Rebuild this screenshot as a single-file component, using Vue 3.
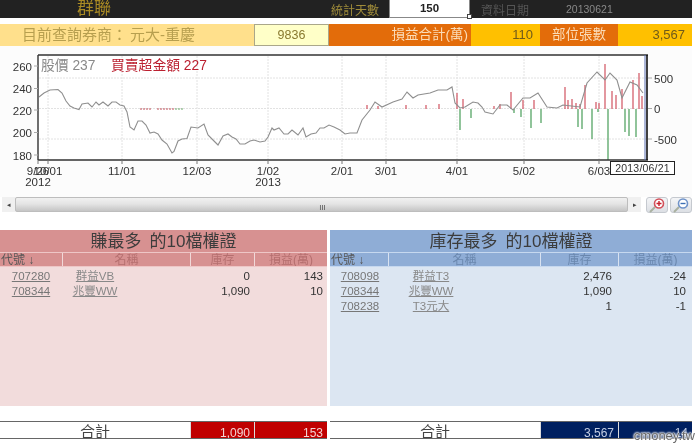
<script setup>
const pricePoints = '39,97 44,93 50,90 58,89.5 62,93 66,101 70,106 74,108 79,109.5 82,104 88,103 92,107 96,102 99,105 103,102 108,106 112,102 116,102 120,105 124,106 127,112 130,127 134,130 138,121 142,121 146,125 150,133 154,132 158,134 162,140 167,144 172,153 174,151.5 178,141 182,139 187,138.5 191,127 198,128 204,124 208,135 214,141 218,145 223,136 228,134 232,137 236,139 240,144 245,144 250,141 254,140 260,142 265,141 268,137 272,128 274,130 279,128 284,134 288,134 292,130 298,135 303,128 306,137 311,134 316,133 320,128 324,128 329,125 334,127 340,130 345,134 350,133 357,133 362,120 370,110 375,102 382,107 393,102 402,99 407,92 413,98 418,95 430,93 438,90 447,90 452,87 455,103 460,108 465,107 473,102 478,103 482,107 485,112 493,114 500,105 507,105 513,110 523,98 530,98 538,93 547,107 557,108 563,105 580,107 587,83 597,72 605,80 610,73 617,80 622,98 630,82 637,85 643,93'
const xTicks = [
  { x: 38, label: '9/26' }, { x: 48, label: '10/01' }, { x: 122, label: '11/01' }, { x: 197, label: '12/03' },
  { x: 268, label: '1/02' }, { x: 342, label: '2/01' }, { x: 386, label: '3/01' }, { x: 457, label: '4/01' },
  { x: 524, label: '5/02' }, { x: 599, label: '6/03' }
]
const gridX = xTicks.slice(1).map(t => t.x)
const leftAxis = [{ y: 66, t: '260' }, { y: 88.5, t: '240' }, { y: 110, t: '220' }, { y: 132.5, t: '200' }, { y: 155, t: '180' }]
const rightAxis = [{ y: 78, t: '500' }, { y: 108.5, t: '0' }, { y: 139, t: '-500' }]
const red = [[457,93],[463,99],[511,92],[523,100],[534,100],[565,87],[568,100],[572,99],[576,103],[585,85],[605,64],[612,91],[616,95],[622,89],[633,80],[639,73],[642,96],[367,105],[378,106],[406,105],[426,105],[439,104],[494,106],[500,104],[596,102],[580,104],[599,103]]
const green = [[460,130],[471,118],[514,113],[521,117],[531,128],[541,123],[578,127],[582,129],[592,139],[608,160],[625,132],[629,136],[636,137],[598,112]]
const dashes = []
for (const x of [140,143,146,149,157,160,163,166,169,172]) dashes.push({ x, c: '#c0505a' })
for (const x of [175,178,181]) dashes.push({ x, c: '#6aa86a' })
const left = [
  { code: '707280', name: '群益VB', stock: '0', pl: '143' },
  { code: '708344', name: '兆豐WW', stock: '1,090', pl: '10' }
]
const right = [
  { code: '708098', name: '群益T3', stock: '2,476', pl: '-24' },
  { code: '708344', name: '兆豐WW', stock: '1,090', pl: '10' },
  { code: '708238', name: 'T3元大', stock: '1', pl: '-1' }
]
</script>

<template>
  <div class="page">
    <header class="top">
      <div class="brand">群聯</div>
      <div class="days-label">統計天數</div>
      <div class="days">150<i class="grip"></i></div>
      <div class="date-label">資料日期</div>
      <div class="date">20130621</div>
    </header>

    <section class="summary">
      <div class="broker"><span>目前查詢券商：</span><span>元大-重慶</span></div>
      <div class="broker-id">9836</div>
      <div class="lab pl-lab">損益合計(萬)</div>
      <div class="val">110</div>
      <div class="lab pos-lab">部位張數</div>
      <div class="val">3,567</div>
    </section>

    <svg class="chart" viewBox="0 46 692 151" width="692" height="151">
      <rect x="0" y="46" width="692" height="151" fill="#fcfcfc" />
      <rect x="38" y="55" width="609" height="105" fill="#fff" />
      <line v-for="x in gridX" :key="'g' + x" :x1="x" :x2="x" y1="56" y2="160" class="grid" />
      <line v-for="a in rightAxis" :key="'h' + a.t" x1="39" x2="646" :y1="a.y" :y2="a.y" class="grid" />
      <line v-for="d in dashes" :key="'d' + d.x" :x1="d.x" :x2="d.x + 2" y1="109" y2="109" :stroke="d.c" stroke-width="1" />
      <line v-for="b in red" :key="'r' + b[0]" :x1="b[0]" :x2="b[0]" :y1="b[1]" y2="109" stroke="#d4606c" stroke-width="1.3" />
      <line v-for="b in green" :key="'n' + b[0]" :x1="b[0]" :x2="b[0]" y1="109" :y2="b[1]" stroke="#55a565" stroke-width="1.3" />
      <polyline :points="pricePoints" fill="none" stroke="#8f8f8f" stroke-width="1.1" />
      <path d="M38 55H648M38 55V160M38 160H648" fill="none" stroke="#333" stroke-width="1.4" />
      <line x1="645" x2="645" y1="55" y2="160" stroke="#5a6fb0" stroke-width="1" />
      <line x1="647" x2="647" y1="55" y2="160" stroke="#111" stroke-width="1.6" />
      <g v-for="a in leftAxis" :key="a.t">
        <line x1="34" x2="38" :y1="a.y" :y2="a.y" stroke="#aaa" />
        <text x="32" :y="a.y + 4.5" text-anchor="end" class="axis">{{ a.t }}</text>
      </g>
      <g v-for="a in rightAxis" :key="'l' + a.t">
        <line x1="648" x2="652" :y1="a.y" :y2="a.y" stroke="#aaa" />
        <text x="654" :y="a.y + 4.5" class="axis">{{ a.t }}</text>
      </g>
      <g v-for="t in xTicks" :key="t.label">
        <line :x1="t.x" :x2="t.x" y1="160" y2="164" stroke="#777" />
        <text :x="t.x" y="175" text-anchor="middle" class="axis">{{ t.label }}</text>
      </g>
      <text x="38" y="186" text-anchor="middle" class="axis">2012</text>
      <text x="268" y="186" text-anchor="middle" class="axis">2013</text>
      <text x="41" y="70" class="legend grey">股價 237</text>
      <text x="111" y="70" class="legend crimson">買賣超金額 227</text>
      <rect x="610.5" y="161.5" width="64" height="13" fill="#fff" stroke="#222" />
      <text x="642.5" y="171.5" text-anchor="middle" class="tip">2013/06/21</text>
    </svg>

    <div class="scrollrow">
      <div class="scrollbar">
        <span class="arrow">◂</span>
        <div class="thumb"><span class="thumb-grip">III</span></div>
        <span class="arrow">▸</span>
      </div>
      <button class="zoom-btn" type="button" aria-label="zoom in">
        <svg viewBox="0 0 22 16" width="22" height="16">
          <path d="M4 15L9 10" stroke="#a9b0a0" stroke-width="2" />
          <circle cx="13" cy="6.5" r="4.5" fill="#fff" stroke="#d2505a" stroke-width="1.6" />
          <path d="M10.5 6.5h5M13 4v5" stroke="#c8202a" stroke-width="1.4" />
        </svg>
      </button>
      <button class="zoom-btn" type="button" aria-label="zoom out">
        <svg viewBox="0 0 22 16" width="22" height="16">
          <path d="M4 15L9 10" stroke="#a9b0a0" stroke-width="2" />
          <circle cx="13" cy="6.5" r="4.5" fill="#fff" stroke="#6f92c8" stroke-width="1.6" />
          <path d="M10.5 6.5h5" stroke="#3d6fb5" stroke-width="1.4" />
        </svg>
      </button>
    </div>

    <section class="tables">
      <div class="side red-side">
        <h2>賺最多 的10檔權證</h2>
        <div class="row head"><span class="code-h">代號 ↓</span><span>名稱</span><span>庫存</span><span>損益(萬)</span></div>
        <div class="body">
          <div v-for="r in left" :key="r.code" class="row">
            <a class="code">{{ r.code }}</a><a class="name">{{ r.name }}</a><span class="num">{{ r.stock }}</span><span class="num">{{ r.pl }}</span>
          </div>
        </div>
        <div class="row total"><span class="total-label">合計</span><span class="tnum">1,090</span><span class="tnum">153</span></div>
      </div>
      <div class="side blue-side">
        <h2>庫存最多 的10檔權證</h2>
        <div class="row head"><span class="code-h">代號 ↓</span><span>名稱</span><span>庫存</span><span>損益(萬)</span></div>
        <div class="body">
          <div v-for="r in right" :key="r.code" class="row">
            <a class="code">{{ r.code }}</a><a class="name">{{ r.name }}</a><span class="num">{{ r.stock }}</span><span class="num">{{ r.pl }}</span>
          </div>
        </div>
        <div class="row total"><span class="total-label">合計</span><span class="tnum">3,567</span><span class="tnum">14</span></div>
      </div>
    </section>

    <div class="watermark">cmoney.tw</div>
  </div>
</template>

<style scoped>
.page {
  position: relative;
  width: 700px;
  height: 446px;
  overflow: hidden;
  background: #fff;
  font-family: "Liberation Sans", "Noto Sans CJK TC", sans-serif;
  color: #333;
  filter: blur(0.3px);
}
.top {
  width: 692px;
  height: 18px;
  background: #222;
  display: grid;
  grid-template-columns: 77px 254px 58px 81px 11px 85px 1fr;
  grid-template-areas: ". brand dlabel days . dtlabel date";
  align-items: center;
}
.brand { grid-area: brand; color: #a98a24; font-size: 17px; line-height: 18px; }
.days-label { grid-area: dlabel; color: #a08c3a; font-size: 12px; }
.days {
  grid-area: days;
  position: relative;
  height: 18px;
  box-sizing: border-box;
  background: #fff;
  border: 1px solid #888;
  border-top: 0;
  color: #222;
  font-size: 11.5px;
  font-weight: 700;
  line-height: 17px;
  text-align: center;
}
.grip { position: absolute; right: -3px; bottom: -2px; width: 3px; height: 3px; border: 1px solid #444; background: #fff; }
.date-label { grid-area: dtlabel; color: #555; font-size: 12px; }
.date { grid-area: date; color: #888; font-size: 10.5px; }

.summary {
  width: 692px;
  height: 22px;
  margin-top: 6px;
  display: grid;
  grid-template-columns: 254px 75px 142px 69px 78px 74px;
  line-height: 22px;
}
.broker {
  background: #ffe08c;
  color: #b79f4f;
  font-size: 15px;
  padding-left: 22px;
  display: flex;
  gap: 6px;
}
.broker span:first-child { width: 102px; white-space: nowrap; }
.broker-id {
  box-sizing: border-box;
  background: #ffffc8;
  border: 1px solid #aaa78a;
  color: #8a7a30;
  font-size: 12.5px;
  line-height: 20px;
  text-align: center;
}
.lab { background: #e36c0a; color: #fbdcb8; font-size: 13.5px; box-sizing: border-box; }
.pl-lab { text-align: right; padding-right: 3px; }
.pos-lab { text-align: center; }
.val { background: #ffc000; color: #6f5a1a; font-size: 13px; text-align: right; padding-right: 7px; }

.chart { display: block; }
.grid { stroke: #e2e2e2; stroke-width: 1; stroke-dasharray: 2 1; }
.axis { font-size: 11.5px; fill: #333; }
.legend { font-size: 13.8px; }
.grey { fill: #8a8a8a; }
.crimson { fill: #bb2030; }
.tip { font-size: 10.5px; fill: #333; letter-spacing: 0.2px; }

.scrollrow {
  width: 692px;
  height: 16px;
  margin-bottom: 17px;
  display: flex;
  align-items: flex-start;
  gap: 2px;
  background: #fff;
}
.scrollbar {
  width: 640px;
  height: 15px;
  margin-left: 2px;
  margin-right: 3px;
  display: flex;
  align-items: center;
  background: #f0f0f0;
  box-sizing: border-box;
}
.arrow { width: 13px; text-align: center; font-size: 7px; color: #444; flex: none; }
.thumb {
  flex: 1;
  height: 15px;
  border: 1px solid #bdbdbd;
  border-radius: 2px;
  box-sizing: border-box;
  background: linear-gradient(#f1f1f1, #e4e4e4 45%, #c5c5c5);
  text-align: center;
  line-height: 13px;
}
.thumb-grip { font-size: 8px; color: #555; position: relative; left: 1px; }
.zoom-btn {
  width: 22px;
  height: 16px;
  padding: 0;
  border: 1px solid #c5c9cf;
  border-radius: 3px;
  background: linear-gradient(#f4f5f7, #dcdfe4);
  display: flex;
}
.zoom-btn svg { display: block; margin: -1px; }

.tables {
  width: 692px;
  display: grid;
  grid-template-columns: 327px 362px;
  column-gap: 3px;
}
.side { display: flex; flex-direction: column; }
h2 {
  margin: 0;
  height: 22px;
  font-weight: 400;
  font-size: 17px;
  word-spacing: 3.3px;
  line-height: 23px;
  text-align: center;
  color: #3c3c3c;
}
.row { display: grid; }
.red-side .row { grid-template-columns: 62px 128px 64px 73px; }
.blue-side .row { grid-template-columns: 58px 152px 78px 74px; }
.head { height: 15px; font-size: 12px; line-height: 15px; text-align: center; box-sizing: border-box; overflow: hidden; }
.head span { border-left: 1px solid rgba(255, 255, 255, 0.65); box-sizing: border-box; }
.head .code-h { border-left: 0; text-align: left; padding-left: 1px; color: #555; }
.red-side h2, .red-side .head { background: #d79191; }
.red-side .head { color: #b56f6f; border-top: 1px solid #eec6c6; border-bottom: 1px solid #eec6c6; }
.blue-side h2, .blue-side .head { background: #8fadd6; }
.blue-side .head { color: #6a87ae; border-top: 1px solid #c6d8ef; border-bottom: 1px solid #c6d8ef; }
.body { height: 139px; box-sizing: border-box; padding-top: 2px; font-size: 11.5px; }
.red-side .body { background: #f2dcdc; }
.blue-side .body { background: #dce6f2; }
.body .row { height: 15px; line-height: 15px; }
.code { text-align: center; color: #777; text-decoration: underline; }
.name { text-align: center; color: #888; text-decoration: underline; }
.num { text-align: right; color: #333; }
.red-side .num { padding-right: 4px; }
.blue-side .num { padding-right: 6px; }
.red-side .name { padding-right: 62px; }
.blue-side .name { padding-right: 66px; }
.blue-side .code { padding-left: 2px; }
.total {
  height: 18px;
  margin-top: 15px;
  box-sizing: border-box;
  border-top: 1px solid #666;
  border-bottom: 1px solid #666;
  background: #fff;
  overflow: hidden;
}
.red-side .total { grid-template-columns: 190px 64px 73px; }
.blue-side .total { grid-template-columns: 210px 78px 74px; }
.total-label { text-align: center; font-size: 15px; color: #444; line-height: 20px; }
.tnum {
  text-align: right;
  font-size: 12px;
  line-height: 22px;
  padding-right: 4px;
  color: #f3d3d3;
  border-left: 1px solid #ddd;
  box-sizing: border-box;
}
.red-side .tnum { background: #c00000; }
.blue-side .tnum { background: #002060; color: #c4cfe4; }

.watermark {
  position: absolute;
  right: 5px;
  bottom: 3px;
  font-size: 13px;
  line-height: 14px;
  color: #666;
  text-shadow: 0 0 2px #fff, 0 0 2px #fff, 0 0 2px #fff, 0 0 3px #fff;
}
</style>
